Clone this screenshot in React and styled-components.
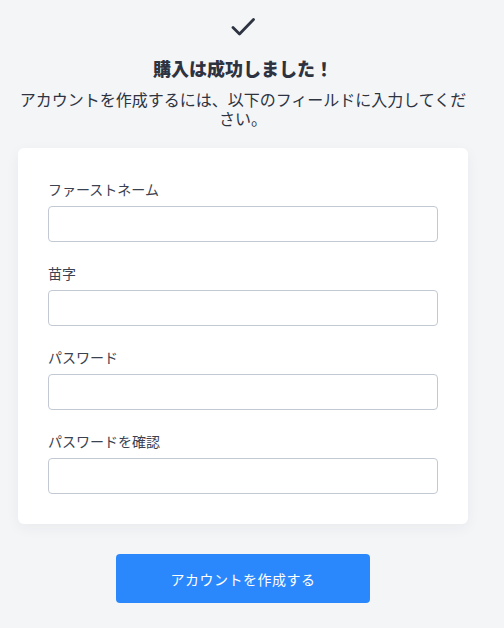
import styled, { createGlobalStyle } from 'styled-components';

const GlobalStyle = createGlobalStyle`
  html, body {
    margin: 0;
    padding: 0;
    background: #f4f5f7;
  }
  body {
    font-family: "Noto Sans CJK JP", "Noto Sans", sans-serif;
    color: #2d3340;
  }
`;

const Page = styled.div`
  width: 486px;
  padding: 17px 0 24px;
  display: flex;
  flex-direction: column;
  align-items: center;
  box-sizing: border-box;
`;

const CheckIcon = styled.svg`
  width: 24px;
  height: 20px;
  display: block;
`;

const Title = styled.h1`
  margin: 18px 0 0;
  font-size: 18px;
  line-height: 26px;
  font-weight: 900;
  color: #2d3340;
  text-align: center;
`;

const Lead = styled.p`
  margin: 9px 0 0;
  padding: 0 18px;
  font-size: 16px;
  line-height: 19px;
  color: #2d3340;
  text-align: center;
`;

const Card = styled.form`
  margin-top: 20px;
  width: 450px;
  box-sizing: border-box;
  padding: 30px;
  background: #fff;
  border-radius: 6px;
  box-shadow: 0 4px 14px rgba(30, 40, 60, 0.05);
  display: flex;
  flex-direction: column;
  gap: 20px;
`;

const Field = styled.label`
  display: flex;
  flex-direction: column;
  gap: 6px;
`;

const LabelText = styled.span`
  font-size: 14px;
  line-height: 22px;
  color: #3a4150;
`;

const Input = styled.input`
  height: 36px;
  box-sizing: border-box;
  border: 1px solid #c2c9d2;
  border-radius: 4px;
  background: #fff;
  padding: 0 10px;
  font-size: 14px;
  outline: none;
`;

const SubmitButton = styled.button`
  margin-top: 30px;
  width: 254px;
  height: 49px;
  border: none;
  border-radius: 4px;
  background: #2b88fc;
  color: #fff;
  font-family: inherit;
  font-size: 14px;
  letter-spacing: 0.5px;
  cursor: pointer;
`;

const fields = [
  { label: 'ファーストネーム', type: 'text' },
  { label: '苗字', type: 'text' },
  { label: 'パスワード', type: 'password' },
  { label: 'パスワードを確認', type: 'password' },
];

export default function App() {
  return (
    <>
      <GlobalStyle />
      <Page>
        <CheckIcon viewBox="0 0 24 20" fill="none">
          <path
            d="M2 10.5 L8.5 17 L22.5 2.5"
            stroke="#2d3340"
            strokeWidth="2.8"
            strokeLinecap="round"
            strokeLinejoin="round"
          />
        </CheckIcon>
        <Title>購入は成功しました！</Title>
        <Lead>
          アカウントを作成するには、以下のフィールドに入力してください。
        </Lead>
        <Card onSubmit={(e) => e.preventDefault()}>
          {fields.map((f) => (
            <Field key={f.label}>
              <LabelText>{f.label}</LabelText>
              <Input type={f.type} />
            </Field>
          ))}
        </Card>
        <SubmitButton type="button">アカウントを作成する</SubmitButton>
      </Page>
    </>
  );
}
